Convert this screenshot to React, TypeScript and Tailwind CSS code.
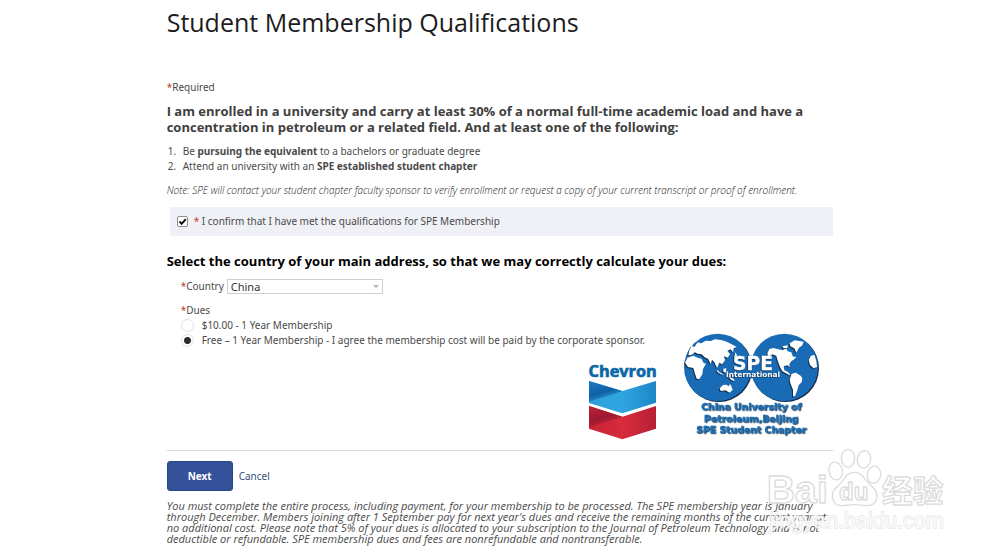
import { useState } from 'react'

const COUNTRIES = ['China', 'Canada', 'United Kingdom', 'United States']

const DUES = [
  { id: 'paid', label: '$10.00 - 1 Year Membership' },
  {
    id: 'free',
    label: 'Free – 1 Year Membership - I agree the membership cost will be paid by the corporate sponsor.',
  },
]

// ── logos ──────────────────────────────────────────────────────────────────

function ChevronLogo() {
  return (
    <svg viewBox="15 15 225 240" className="h-20 w-[75px] shrink-0" role="img" aria-label="Chevron">
      <defs>
        <linearGradient id="blueBand" x1="0" y1="0" x2="1" y2="0">
          <stop offset="0" stopColor="#2c9fdb" />
          <stop offset="0.5" stopColor="#2fa6e0" />
          <stop offset="1" stopColor="#1d86c8" />
        </linearGradient>
        <linearGradient id="blueFold" x1="0" y1="0" x2="0.5" y2="1">
          <stop offset="0" stopColor="#1b7cc0" />
          <stop offset="0.6" stopColor="#1160a6" />
          <stop offset="1" stopColor="#2c9fdb" />
        </linearGradient>
        <linearGradient id="redBand" x1="0" y1="0" x2="1" y2="0">
          <stop offset="0" stopColor="#c92336" />
          <stop offset="0.5" stopColor="#d62c3c" />
          <stop offset="1" stopColor="#b81f35" />
        </linearGradient>
        <linearGradient id="redFold" x1="0" y1="0" x2="0.5" y2="1">
          <stop offset="0" stopColor="#bd2036" />
          <stop offset="0.6" stopColor="#9c1a32" />
          <stop offset="1" stopColor="#c92336" />
        </linearGradient>
      </defs>
      <text
        x="128"
        y="66"
        textAnchor="middle"
        fontFamily="'Open Sans', sans-serif"
        fontWeight="700"
        fontSize="49"
        fill="#0b67a8"
        stroke="#0b67a8"
        strokeWidth="2"
      >
        Chevron
      </text>
      <path d="M27 78 L127 108 L228 78 V143 L127 175 L27 144 Z" fill="url(#blueBand)" />
      <path d="M27 78 L127 108 L104 116 L27 140 Z" fill="url(#blueFold)" />
      <path d="M27 153 L127 185 L228 153 V221 L127 253 L27 221 Z" fill="url(#redBand)" />
      <path d="M27 153 L127 185 L104 193 L27 217 Z" fill="url(#redFold)" />
    </svg>
  )
}

const LAND = [
  // Europe and Asia
  'M42 78 L50 62 L58 66 L68 52 L79 55 L92 47 L108 48 L119 43 L139 45 L155 50 L173 59 L185 66 L176 70 L174 82 L167 73 L157 77 L165 88 L158 98 L147 94 L150 106 L141 118 L133 113 L126 129 L118 112 L111 104 L107 117 L99 101 L89 97 L80 88 L68 86 L60 82 L49 90 L40 91 Z',
  // Africa
  'M37 98 L55 92 L68 98 L79 101 L86 114 L93 116 L84 132 L82 148 L73 162 L65 161 L59 143 L55 129 L39 126 L30 113 Z',
  // islands and Australia
  'M126 134 L134 142 L147 149 L138 148 L127 140 Z',
  'M145 131 L154 130 L153 143 L145 140 Z',
  'M134 190 L144 180 L155 179 L160 184 L166 177 L173 194 L164 203 L151 196 L137 198 Z',
  'M181 82 L186 91 L181 101 L177 99 Z',
  'M158 154 L174 160 L180 168 L170 166 Z',
  // North America
  'M277 84 L283 72 L295 69 L310 73 L323 76 L333 70 L338 79 L349 82 L353 94 L364 97 L356 104 L349 109 L343 118 L344 126 L337 121 L326 124 L328 136 L339 141 L347 151 L338 148 L322 139 L315 126 L308 107 L304 93 L293 88 L279 96 Z',
  // Greenland
  'M344 55 L359 46 L386 50 L381 62 L372 68 L364 83 L358 70 L346 64 Z',
  'M322 64 L338 61 L337 69 L326 70 Z',
  // South America
  'M350 146 L363 143 L377 152 L382 159 L380 172 L371 181 L367 195 L360 214 L354 214 L354 194 L346 175 L344 163 Z',
  // eastern edge
  'M407 93 L418 89 L424 108 L426 126 L416 130 L405 120 L401 105 Z',
]

const CAPTION = ['China University of', 'Petroleum,Beijing', 'SPE Student Chapter']

function SpeLogo() {
  return (
    <svg
      viewBox="0 0 465 345"
      className="mr-[3px] h-[115px] w-[155px] shrink-0 self-end"
      role="img"
      aria-label="SPE International, China University of Petroleum, Beijing, SPE Student Chapter"
    >
      <circle cx="131" cy="130" r="101" fill="#152b45" />
      <circle cx="331" cy="130" r="101" fill="#152b45" />
      <circle cx="128" cy="127" r="101" fill="#1a6bb5" />
      <circle cx="328" cy="127" r="101" fill="#1a6bb5" />
      {LAND.map((d) => (
        <g key={d}>
          <path d={d} fill="#12314f" transform="translate(-3 3)" />
          <path d={d} fill="#fff" />
        </g>
      ))}
      <path d="M224 92 H232 V160 H224 Z" fill="#1a6bb5" />
      <g textAnchor="middle" fontFamily="'DejaVu Sans', Verdana, sans-serif" fontWeight="700">
        <g fill="#fff" className="drop-shadow-[-2px_2px_0_#12314f]">
          <text x="234" y="135" fontSize="56" stroke="#fff" strokeWidth="1">SPE</text>
          <text x="234" y="155" fontSize="22">International</text>
        </g>
        <g fill="#1f72b8" fontSize="28" className="drop-shadow-[2px_2px_0_#10263e]">
          {CAPTION.map((line, i) => (
            <text key={line} x="229" y={255 + i * 35} stroke="#1f72b8" strokeWidth="1">{line}</text>
          ))}
        </g>
      </g>
    </svg>
  )
}

function Watermark() {
  return (
    <svg
      viewBox="0 0 600 348"
      className="pointer-events-none absolute top-[440px] left-[76%] h-[116px] w-[200px]"
      aria-hidden="true"
    >
      <g fill="#fff" fillOpacity="0.75" stroke="#dcdcdc" strokeWidth="4" strokeLinejoin="round">
        <text x="20" y="190" fontFamily="'Liberation Sans', Arial, sans-serif" fontWeight="700" fontSize="118">Bai</text>
        <ellipse cx="227" cy="93" rx="20" ry="27" transform="rotate(-12 227 93)" />
        <ellipse cx="264" cy="55" rx="20" ry="27" />
        <ellipse cx="312" cy="58" rx="20" ry="26" transform="rotate(10 312 58)" />
        <ellipse cx="342" cy="104" rx="20" ry="26" transform="rotate(10 342 104)" />
        <path d="M283 97 C307 97 313 119 331 135 C352 152 356 169 346 186 C333 204 309 194 284 194 C258 194 238 204 223 188 C212 169 217 151 236 136 C253 122 257 97 283 97 Z" />
        <text x="237" y="181" fontFamily="'Liberation Sans', Arial, sans-serif" fontWeight="700" fontSize="72">du</text>
        <text x="366" y="185" fontFamily="'Noto Sans CJK SC', sans-serif" fontWeight="700" fontSize="92">经验</text>
      </g>
      <text
        x="28"
        y="264"
        fontFamily="'Liberation Sans', Arial, sans-serif"
        fontSize="65"
        fill="#fff"
        fillOpacity="0.8"
        stroke="#e0e0e0"
        strokeWidth="4"
        strokeOpacity="0.8"
        paintOrder="stroke"
      >
        jingyan.baidu.com
      </text>
    </svg>
  )
}

// ── page ───────────────────────────────────────────────────────────────────

function Star() {
  return <span className="text-[#b5482a]">*</span>
}

export default function App() {
  const [confirmed, setConfirmed] = useState(true)
  const [country, setCountry] = useState('China')
  const [dues, setDues] = useState('free')

  return (
    <div className="relative min-h-screen overflow-hidden bg-white font-['Noto_Sans',sans-serif] text-[10px] leading-[15px] text-[#4a4a4a]">
      <main className="mx-auto w-2/3">
        <h1 className="font-['Open_Sans',sans-serif] text-[25px] leading-[44px] text-[#1c1c22]">
          Student Membership Qualifications
        </h1>

        <p className="mt-[35px] leading-4"><Star />Required</p>

        <h2 className="mt-2 font-['Open_Sans',sans-serif] text-[13px] leading-4 font-bold text-[#404040]">
          I am enrolled in a university and carry at least 30% of a normal full-time academic load and have a
          concentration in petroleum or a related field. And at least one of the following:
        </h2>

        <ol className="mt-[9px] list-decimal pl-3">
          <li className="pl-1">Be <b>pursuing the equivalent</b> to a bachelors or graduate degree</li>
          <li className="pl-1">Attend an university with an <b>SPE established student chapter</b></li>
        </ol>

        <p className="mt-2.5 font-['Open_Sans',sans-serif] leading-3 font-light text-[#222] italic">
          Note: SPE will contact your student chapter faculty sponsor to verify enrollment or request a copy of your
          current transcript or proof of enrollment.
        </p>

        <label className="mt-[11px] ml-[3px] flex h-[29px] items-center bg-[#f0f1f7] pl-[7px]">
          <span className="relative mr-1.5 flex">
            <input
              type="checkbox"
              checked={confirmed}
              onChange={(e) => setConfirmed(e.target.checked)}
              className="size-[11px] appearance-none rounded-[2px] border border-[#8c8c8c] bg-white"
            />
            {confirmed && (
              <svg viewBox="0 0 11 11" className="pointer-events-none absolute inset-0 size-[11px]" aria-hidden="true">
                <path d="M2.5 5.5 L4.7 7.8 L8.8 3.2" fill="none" stroke="#111" strokeWidth="2" />
              </svg>
            )}
          </span>
          <span><span className="text-[#d03a2a]">*</span> I confirm that I have met the qualifications for SPE Membership</span>
        </label>

        <h2 className="mt-4 font-['Open_Sans',sans-serif] text-[13px] leading-[18px] font-bold text-black">
          Select the country of your main address, so that we may correctly calculate your dues:
        </h2>

        <div className="mt-2 ml-3.5 flex h-4 items-center">
          <label htmlFor="country" className="mr-[3px]"><Star />Country</label>
          <span className="relative flex">
            <select
              id="country"
              value={country}
              onChange={(e) => setCountry(e.target.value)}
              className="h-[15px] w-[156px] appearance-none border border-[#cfcfcf] bg-white pl-[3px] text-[11px] leading-[13px] text-[#333]"
            >
              {COUNTRIES.map((c) => <option key={c}>{c}</option>)}
            </select>
            <svg viewBox="0 0 6 4" className="pointer-events-none absolute top-1.5 right-1 h-1 w-1.5" aria-hidden="true">
              <path d="M0 0 H6 L3 3.5 Z" fill="#bdbdbd" />
            </svg>
          </span>
        </div>

        <div className="mt-[9px] flex">
          <div className="flex flex-1 flex-col">
            <fieldset className="ml-3.5">
              <legend><Star />Dues</legend>
              {DUES.map((d) => (
                <label key={d.id} className="flex items-center">
                  <input
                    type="radio"
                    name="dues"
                    checked={dues === d.id}
                    onChange={() => setDues(d.id)}
                    className="mr-2 size-[13px] appearance-none rounded-full border border-[#e2e2e2] bg-white checked:bg-[radial-gradient(circle,#2b2b2b_0_3px,#fff_4px)]"
                  />
                  {d.label}
                </label>
              ))}
            </fieldset>
            <div className="mt-3 mr-[15px] flex justify-end">
              <ChevronLogo />
            </div>
          </div>
          <SpeLogo />
        </div>

        <hr className="mt-2.5 border-[#d6d6d6]" />

        <div className="mt-2.5 flex items-center gap-1.5">
          <button type="button" className="h-[30px] w-[66px] rounded-[3px] border border-[#2c478a] bg-[#34519a] font-bold text-white">
            Next
          </button>
          <a href="#cancel" className="text-[#35507a]">Cancel</a>
        </div>

        <p className="mt-[9px] font-['Open_Sans',sans-serif] text-[11px] leading-[11px] italic">
          You must complete the entire process, including payment, for your membership to be processed. The SPE
          membership year is January through December. Members joining after 1 September pay for next year's dues and
          receive the remaining months of the current year at no additional cost. Please note that 5% of your dues is
          allocated to your subscription to the Journal of Petroleum Technology and is not deductible or refundable. SPE
          membership dues and fees are nonrefundable and nontransferable.
        </p>
      </main>
      <Watermark />
    </div>
  )
}
